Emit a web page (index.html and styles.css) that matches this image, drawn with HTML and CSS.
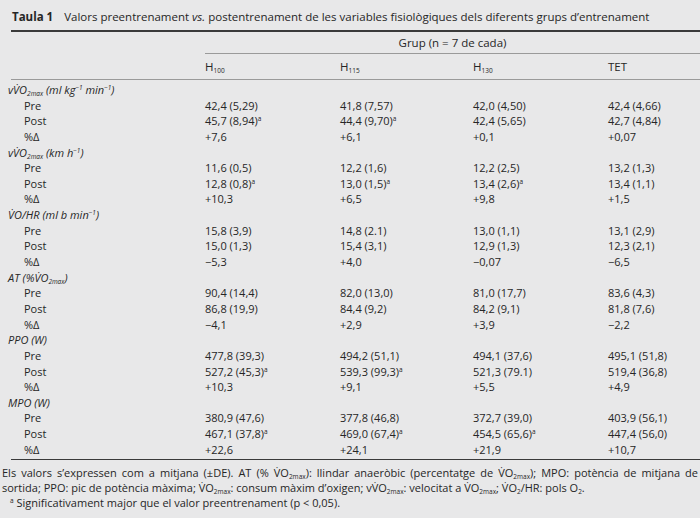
FILE: index.html
```html
<!DOCTYPE html>
<html lang="ca">
<head>
<meta charset="utf-8">
<link rel="stylesheet" href="styles.css">
</head>
<body>
<div class="page">
  <div class="title"><b>Taula 1</b><span class="cap">Valors preentrenament <i>vs.</i> postentrenament de les variables fisiològiques dels diferents grups d’entrenament</span></div>
  <div class="row grup-row"><div></div><div class="grup">Grup (n = 7 de cada)</div></div>
  <div class="row head"><div></div><div>H<sub>100</sub></div><div>H<sub>115</sub></div><div>H<sub>130</sub></div><div>TET</div></div>
  <div class="body">
    <div class="row"><div class="lab">vV̇O<sub>2max</sub> (ml kg<sup>−1</sup> min<sup>−1</sup>)</div></div>
    <div class="row"><div class="sub">Pre</div><div>42,4 (5,29)</div><div>41,8 (7,57)</div><div>42,0 (4,50)</div><div>42,4 (4,66)</div></div>
    <div class="row"><div class="sub">Post</div><div>45,7 (8,94)<sup>a</sup></div><div>44,4 (9,70)<sup>a</sup></div><div>42,4 (5,65)</div><div>42,7 (4,84)</div></div>
    <div class="row"><div class="sub">%Δ</div><div>+7,6</div><div>+6,1</div><div>+0,1</div><div>+0,07</div></div>

    <div class="row"><div class="lab">vV̇O<sub>2max</sub> (km h<sup>−1</sup>)</div></div>
    <div class="row"><div class="sub">Pre</div><div>11,6 (0,5)</div><div>12,2 (1,6)</div><div>12,2 (2,5)</div><div>13,2 (1,3)</div></div>
    <div class="row"><div class="sub">Post</div><div>12,8 (0,8)<sup>a</sup></div><div>13,0 (1,5)<sup>a</sup></div><div>13,4 (2,6)<sup>a</sup></div><div>13,4 (1,1)</div></div>
    <div class="row"><div class="sub">%Δ</div><div>+10,3</div><div>+6,5</div><div>+9,8</div><div>+1,5</div></div>

    <div class="row"><div class="lab">V̇O/HR (ml b min<sup>−1</sup>)</div></div>
    <div class="row"><div class="sub">Pre</div><div>15,8 (3,9)</div><div>14,8 (2.1)</div><div>13,0 (1,1)</div><div>13,1 (2,9)</div></div>
    <div class="row"><div class="sub">Post</div><div>15,0 (1,3)</div><div>15,4 (3,1)</div><div>12,9 (1,3)</div><div>12,3 (2,1)</div></div>
    <div class="row"><div class="sub">%Δ</div><div>−5,3</div><div>+4,0</div><div>−0,07</div><div>−6,5</div></div>

    <div class="row"><div class="lab">AT (%V̇O<sub>2max</sub>)</div></div>
    <div class="row"><div class="sub">Pre</div><div>90,4 (14,4)</div><div>82,0 (13,0)</div><div>81,0 (17,7)</div><div>83,6 (4,3)</div></div>
    <div class="row"><div class="sub">Post</div><div>86,8 (19,9)</div><div>84,4 (9,2)</div><div>84,2 (9,1)</div><div>81,8 (7,6)</div></div>
    <div class="row"><div class="sub">%Δ</div><div>−4,1</div><div>+2,9</div><div>+3,9</div><div>−2,2</div></div>

    <div class="row"><div class="lab">PPO (W)</div></div>
    <div class="row"><div class="sub">Pre</div><div>477,8 (39,3)</div><div>494,2 (51,1)</div><div>494,1 (37,6)</div><div>495,1 (51,8)</div></div>
    <div class="row"><div class="sub">Post</div><div>527,2 (45,3)<sup>a</sup></div><div>539,3 (99,3)<sup>a</sup></div><div>521,3 (79.1)</div><div>519,4 (36,8)</div></div>
    <div class="row"><div class="sub">%Δ</div><div>+10,3</div><div>+9,1</div><div>+5,5</div><div>+4,9</div></div>

    <div class="row"><div class="lab">MPO (W)</div></div>
    <div class="row"><div class="sub">Pre</div><div>380,9 (47,6)</div><div>377,8 (46,8)</div><div>372,7 (39,0)</div><div>403,9 (56,1)</div></div>
    <div class="row"><div class="sub">Post</div><div>467,1 (37,8)<sup>a</sup></div><div>469,0 (67,4)<sup>a</sup></div><div>454,5 (65,6)<sup>a</sup></div><div>447,4 (56,0)</div></div>
    <div class="row"><div class="sub">%Δ</div><div>+22,6</div><div>+24,1</div><div>+21,9</div><div>+10,7</div></div>
  </div>
  <div class="foot">
    <div class="fl just">Els valors s’expressen com a mitjana (±DE). AT (% V̇O<sub>2max</sub>): llindar anaeròbic (percentatge de V̇O<sub>2max</sub>); MPO: potència de mitjana de</div>
    <div class="fl">sortida; PPO: pic de potència màxima; V̇O<sub>2max</sub>: consum màxim d’oxigen; vV̇O<sub>2max</sub>: velocitat a V̇O<sub>2max</sub>; V̇O<sub>2</sub>/HR: pols O<sub>2</sub>.</div>
    <div class="fl note"><sup>a</sup> Significativament major que el valor preentrenament (p &lt; 0,05).</div>
  </div>
</div>
</body>
</html>
```
FILE: styles.css
```css
html, body {
  margin: 0;
  padding: 0;
  background: #e8e8e9;
}
body {
  font-family: "Open Sans", "DejaVu Sans", sans-serif;
  font-size: 11px;
  color: #262626;
  width: 700px;
  height: 518px;
  overflow: hidden;
}
.page {
  width: 700px;
}
.title {
  margin-left: 11px;
  padding: 10px 0 6px 1px;
  line-height: 14px;
  font-size: 11.5px;
  border-bottom: 2px solid #3a3a3a;
  white-space: nowrap;
}
.title b {
  font-weight: 700;
}
.title .cap {
  margin-left: 11px;
}
.row {
  display: grid;
  grid-template-columns: 194px 135px 133px 135px 1fr;
  margin-left: 11px;
  line-height: 14px;
  white-space: nowrap;
}
.grup-row {
  padding-top: 4px;
}
.grup {
  grid-column: 2 / 6;
  text-align: center;
  padding: 0 0 3px 0;
  border-bottom: 1px solid #9a9a9a;
  font-size: 11.5px;
}
.head {
  padding: 6px 0 5px 0;
  border-bottom: 1px solid #9a9a9a;
  font-size: 11.5px;
}
.head sub {
  font-size: 6.5px;
  vertical-align: -2px;
}
.body {
  padding: 2px 0 2px 0;
  border-bottom: 1px solid #3a3a3a;
  margin-left: 11px;
}
.body .row {
  margin-left: 0;
  height: 15.65px;
  line-height: 15.65px;
}
.lab {
  grid-column: 1 / 6;
  font-style: italic;
  margin-left: -3px;
}
.sub {
  padding-left: 13px;
}
sub {
  font-size: 6.5px;
  vertical-align: -2px;
  line-height: 0;
}
sup {
  font-size: 6.5px;
  vertical-align: 4px;
  line-height: 0;
}
.foot {
  padding: 5px 2px 0 2px;
  line-height: 15px;
}
.fl {
  white-space: nowrap;
}
.just {
  white-space: normal;
  text-align: justify;
  text-align-last: justify;
}
.note {
  padding-left: 8px;
}
```
